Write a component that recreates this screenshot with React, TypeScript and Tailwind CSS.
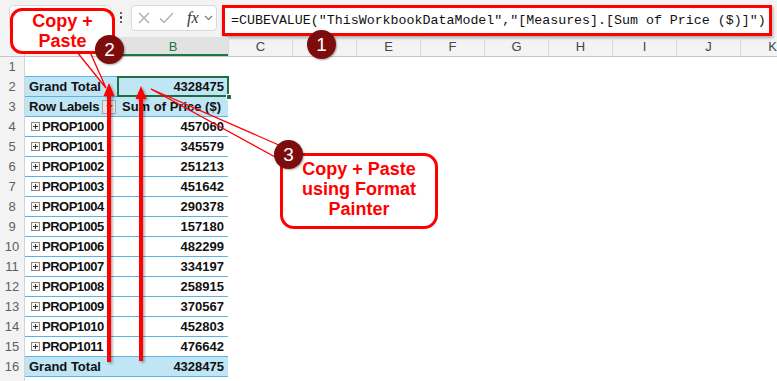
const items = [
  ['PROP1000', '457060'],
  ['PROP1001', '345579'],
  ['PROP1002', '251213'],
  ['PROP1003', '451642'],
  ['PROP1004', '290378'],
  ['PROP1005', '157180'],
  ['PROP1006', '482299'],
  ['PROP1007', '334197'],
  ['PROP1008', '258915'],
  ['PROP1009', '370567'],
  ['PROP1010', '452803'],
  ['PROP1011', '476642'],
]

const cols = ['C', 'D', 'E', 'F', 'G', 'H', 'I', 'J', 'K']

function FormulaBar() {
  return (
    <div className="flex h-[37px] bg-[#f3f3f3]">
      <div className="ml-[9px] mt-[5px] h-[26px] w-[102px] rounded-[4px] border border-[#d8d8d8] bg-white" />
      <div className="flex w-[20px] flex-col items-center justify-center gap-[2px] pb-[2px]">
        <span className="h-[2.5px] w-[2.5px] rounded-full bg-[#333]" />
        <span className="h-[2.5px] w-[2.5px] rounded-full bg-[#333]" />
        <span className="h-[2.5px] w-[2.5px] rounded-full bg-[#333]" />
      </div>
      <div className="mt-[5px] flex h-[26px] w-[86px] items-center rounded-[4px] border border-[#d8d8d8] bg-white">
        <svg width="12" height="12" viewBox="0 0 12 12" className="ml-[6px]">
          <path d="M1 1 L11 11 M11 1 L1 11" stroke="#a8a8a8" strokeWidth="1.2" fill="none" />
        </svg>
        <svg width="15" height="12" viewBox="0 0 15 12" className="ml-[9px]">
          <path d="M1 6.5 L5 10.5 L14 1" stroke="#a8a8a8" strokeWidth="1.2" fill="none" />
        </svg>
        <span className="ml-[13px] font-['Liberation_Serif',serif] text-[16px] italic leading-none text-[#333]">fx</span>
        <svg width="9" height="6" viewBox="0 0 9 6" className="ml-[5px]">
          <path d="M1 1 L4.5 4.5 L8 1" stroke="#777" strokeWidth="1.1" fill="none" />
        </svg>
      </div>
      <div className="mr-[5px] ml-[5px] mt-[5px] flex h-[31px] flex-1 items-center overflow-hidden whitespace-nowrap border-[3px] border-[#ff0000] bg-white pl-[6px] font-['Liberation_Mono',monospace] text-[13.3px] text-[#111] shadow-[1px_2px_3px_rgba(0,0,0,0.3)]">
        =CUBEVALUE("ThisWorkbookDataModel","[Measures].[Sum of Price ($)]")
      </div>
    </div>
  )
}

function HeaderRow() {
  return (
    <div className="flex h-[20px] border-b border-[#c4c4c4] bg-[#f3f3f3] text-[13px] font-normal leading-[19px] text-[#444]">
      <div className="w-[25px] shrink-0 border-r border-[#d4d4d4]" />
      <div className="w-[93px] shrink-0 border-r border-[#d4d4d4] text-center">A</div>
      <div className="w-[110px] shrink-0 border-b-2 border-[#217346] bg-[#e2e2e2] text-center text-[#217346]">B</div>
      {cols.map((c) => (
        <div key={c} className="w-[64px] shrink-0 border-l border-[#dadada] text-center">
          {c}
        </div>
      ))}
    </div>
  )
}

function Gutter({ n }: { n: number }) {
  return (
    <div className="w-[25px] shrink-0 border-r border-[#d4d4d4] bg-[#f3f3f3] text-center text-[13px] font-normal text-[#5f5f5f]">
      {n}
    </div>
  )
}

function Expand() {
  return (
    <span className="relative mr-[2px] inline-block h-[9px] w-[9px] shrink-0 border border-[#8a8a8a] bg-[#f6f6f6]">
      <span className="absolute left-[1px] top-[3px] h-[1px] w-[5px] bg-[#333]" />
      <span className="absolute left-[3px] top-[1px] h-[5px] w-[1px] bg-[#333]" />
    </span>
  )
}

function Grid() {
  const line = 'border-b border-[#5ab4e3]'
  const blue = 'bg-[#c0e5f5]'
  return (
    <div className="font-['Liberation_Sans',Arial,sans-serif] text-[13px] font-bold leading-[19px] text-[#111]">
      <HeaderRow />
      <div className="flex h-[20px]">
        <Gutter n={1} />
        <div className={`w-[93px] shrink-0 ${line}`} />
        <div className={`w-[110px] shrink-0 ${line}`} />
      </div>
      <div className="flex h-[20px]">
        <Gutter n={2} />
        <div className={`w-[93px] shrink-0 whitespace-nowrap pl-[4px] ${blue} ${line}`}>Grand Total</div>
        <div className={`relative w-[110px] shrink-0 pr-[4px] text-right ${blue} ${line}`}>
          4328475
          <div className="absolute -bottom-[1px] -left-[1px] -right-[1px] -top-[1px] border-2 border-[#1e6e42]" />
          <div className="absolute -bottom-[4px] -right-[4px] h-[6px] w-[6px] border border-white bg-[#1e6e42]" />
        </div>
      </div>
      <div className="flex h-[20px]">
        <Gutter n={3} />
        <div className={`flex w-[93px] shrink-0 items-center whitespace-nowrap pl-[4px] ${blue} ${line}`}>
          <span className="tracking-[-0.2px]">Row Labels</span>
          <span className="ml-[3px] flex h-[14px] w-[14px] shrink-0 items-center justify-center border border-[#a6a6a6] bg-[#e6e6e6]">
            <svg width="7" height="4" viewBox="0 0 7 4">
              <path d="M0 0 L7 0 L3.5 4 Z" fill="#666" />
            </svg>
          </span>
        </div>
        <div className={`w-[110px] shrink-0 whitespace-nowrap pl-[4px] ${blue} ${line}`}>Sum of Price ($)</div>
      </div>
      {items.map(([label, value], i) => (
        <div key={label} className="flex h-[20px]">
          <Gutter n={i + 4} />
          <div className={`flex w-[93px] shrink-0 items-center whitespace-nowrap pl-[6px] ${line}`}>
            <Expand />
            <span className="tracking-[-0.5px]">{label}</span>
          </div>
          <div className={`w-[110px] shrink-0 pr-[4px] text-right ${line}`}>{value}</div>
        </div>
      ))}
      <div className="flex h-[20px]">
        <Gutter n={16} />
        <div className={`w-[93px] shrink-0 whitespace-nowrap pl-[4px] ${blue} ${line}`}>Grand Total</div>
        <div className={`w-[110px] shrink-0 pr-[4px] text-right ${blue} ${line}`}>4328475</div>
      </div>
      <div className="flex h-[20px]">
        <Gutter n={17} />
      </div>
    </div>
  )
}

function Badge({ n, className }: { n: string; className: string }) {
  return (
    <div
      className={`absolute flex h-[29px] w-[29px] items-center justify-center rounded-full bg-[#7d0d0d] font-['Liberation_Sans',Arial,sans-serif] text-[19px] leading-none text-white shadow-[1px_1px_2px_rgba(0,0,0,0.35)] ${className}`}
    >
      {n}
    </div>
  )
}

function Annotations() {
  return (
    <>
      <svg className="pointer-events-none absolute left-0 top-0" width="777" height="381">
        <defs>
          <filter id="sh" x="-50%" y="-10%" width="200%" height="120%">
            <feDropShadow dx="1.5" dy="1.5" stdDeviation="1" floodColor="#000" floodOpacity="0.35" />
          </filter>
        </defs>
        <polygon points="77,52 106,88 90,52" fill="white" stroke="#ff0000" strokeWidth="1.3" />
        <line x1="151" y1="89" x2="281" y2="146" stroke="#ff0000" strokeWidth="1.3" />
        <line x1="151" y1="89" x2="277" y2="158" stroke="#ff0000" strokeWidth="1.3" />
        <g filter="url(#sh)">
          <line x1="109" y1="362" x2="109" y2="94" stroke="#ff0000" strokeWidth="4" />
          <polygon points="109,83 114.5,96 103.5,96" fill="#ff0000" />
        </g>
        <g filter="url(#sh)">
          <line x1="141" y1="361" x2="141" y2="97" stroke="#ff0000" strokeWidth="4" />
          <polygon points="141,86 146.5,99 135.5,99" fill="#ff0000" />
        </g>
      </svg>

      <div className="absolute left-[10px] top-[8px] flex h-[46px] w-[105px] flex-col items-center rounded-[12px] border-[3px] border-[#ff0000] bg-white font-['Liberation_Sans',Arial,sans-serif] text-[18px] font-bold leading-[20px] text-[#ff0000]">
        <span>Copy +</span>
        <span>Paste</span>
      </div>

      <div className="absolute left-[280px] top-[153px] flex h-[76px] w-[158px] flex-col items-center rounded-[14px] border-[3px] border-[#ff0000] bg-white pt-[3px] font-['Liberation_Sans',Arial,sans-serif] text-[18px] font-bold leading-[20px] text-[#ff0000]">
        <span>Copy + Paste</span>
        <span>using Format</span>
        <span>Painter</span>
      </div>

      <Badge n="1" className="left-[307px] top-[30px]" />
      <Badge n="2" className="left-[95px] top-[35px]" />
      <Badge n="3" className="left-[274px] top-[140px]" />
    </>
  )
}

export default function App() {
  return (
    <div className="relative h-[381px] w-[777px] overflow-hidden bg-white font-['Liberation_Sans',Arial,sans-serif]">
      <FormulaBar />
      <Grid />
      <Annotations />
    </div>
  )
}
